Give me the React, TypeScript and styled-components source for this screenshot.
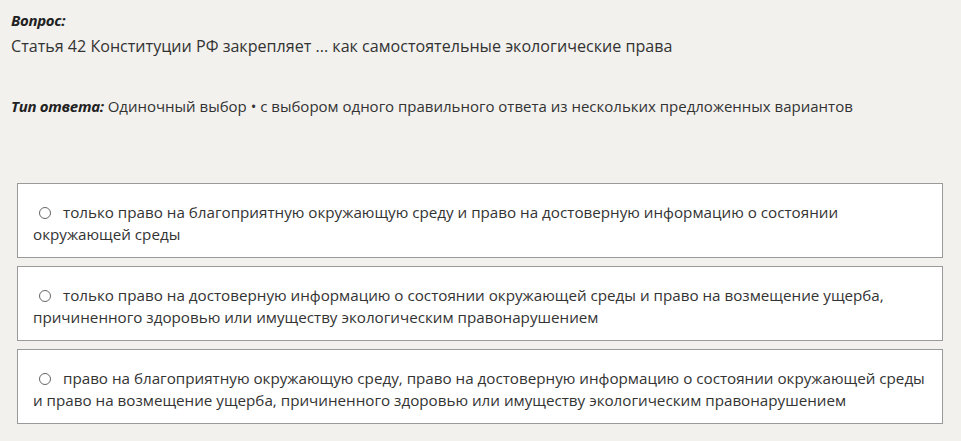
import { FC } from 'react';
import styled, { createGlobalStyle } from 'styled-components';

const GlobalStyle = createGlobalStyle`
  html, body {
    margin: 0;
    padding: 0;
    background: #f2f1ee;
  }
  body {
    font-family: 'Open Sans', 'Noto Sans', sans-serif;
    color: #333;
  }
`;

const options = [
  'только право на благоприятную окружающую среду и право на достоверную информацию о состоянии окружающей среды',
  'только право на достоверную информацию о состоянии окружающей среды и право на возмещение ущерба, причиненного здоровью или имуществу экологическим правонарушением',
  'право на благоприятную окружающую среду, право на достоверную информацию о состоянии окружающей среды и право на возмещение ущерба, причиненного здоровью или имуществу экологическим правонарушением',
];

const App: FC = () => (
  <>
    <GlobalStyle />
    <Page>
      <Label>Вопрос:</Label>
      <Question>Статья 42 Конституции РФ закрепляет ... как самостоятельные экологические права</Question>
      <AnswerType>
        <Label as="span">Тип ответа:</Label> Одиночный выбор • с выбором одного правильного ответа из нескольких предложенных вариантов
      </AnswerType>
      <Options>
        {options.map((text) => (
          <Option key={text}>
            <Radio />
            {text}
          </Option>
        ))}
      </Options>
    </Page>
  </>
);

export default App;

const Page = styled.div`
  padding: 8px 0 0 11px;
`;

const Label = styled.div`
  font-style: italic;
  font-weight: 700;
  font-size: 15px;
  letter-spacing: -0.3px;
  line-height: 24px;
  color: #222;
`;

const Question = styled.div`
  margin-top: 2px;
  font-size: 16.1px;
  line-height: 24px;
`;

const AnswerType = styled.div`
  margin-top: 36px;
  font-size: 15px;
  line-height: 24px;
`;

const Options = styled.div`
  margin: 65px 0 0 6px;
  width: 926px;
  display: flex;
  flex-direction: column;
  gap: 8px;
`;

const Option = styled.div`
  box-sizing: border-box;
  height: 75px;
  padding: 17px 14px 0 15px;
  background: #fff;
  border: 1px solid #9a9a9a;
  font-size: 15.2px;
  line-height: 22px;
`;

const Radio = styled.span`
  display: inline-block;
  box-sizing: border-box;
  width: 12px;
  height: 12px;
  margin: 0 12px 0 6px;
  border: 1px solid #666;
  border-radius: 50%;
  vertical-align: -1px;
`;
